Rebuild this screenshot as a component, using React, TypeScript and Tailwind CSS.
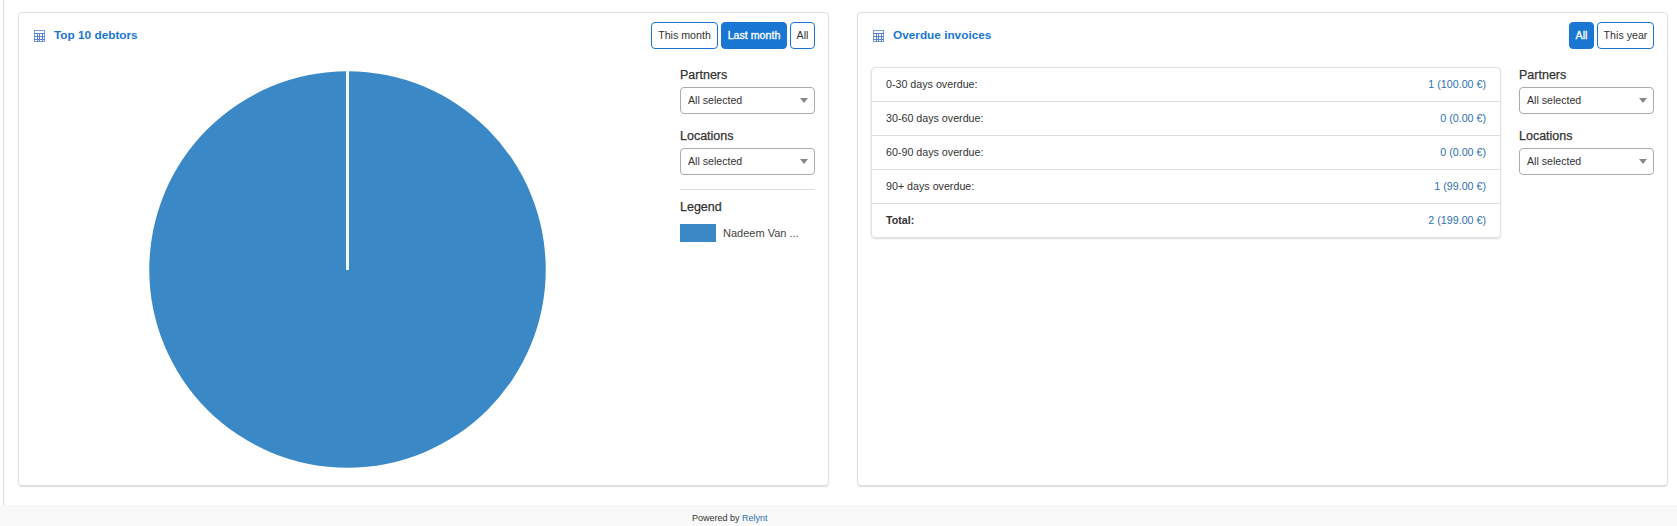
import React from 'react';

const CalendarIcon = () => (
  <svg width="11" height="12" viewBox="0 0 11 12" className="shrink-0" fill="none" stroke="#5b82d6" strokeWidth="1" shapeRendering="crispEdges">
    <rect x="0.5" y="0.5" width="10" height="11" stroke="#7d9be0" />
    <path d="M0 3.5H11M0 6.5H11M0 9H11M3.5 4V12M5.5 4V12M8 4V12" />
  </svg>
);

const RangeButton: React.FC<{ label: string; active?: boolean; className: string }> = ({ label, active, className }) => (
  <button
    className={`h-[27px] rounded-[4px] border border-[#1976d2] text-center text-[10.65px] ${className} ${
      active ? 'bg-[#1976d2] text-white [-webkit-text-stroke:0.3px_#fff]' : 'bg-white text-[#333]'
    }`}
  >
    {label}
  </button>
);

const FilterSelect: React.FC<{ label: string }> = ({ label }) => (
  <div>
    <div className="mb-[4px] h-[18px] text-[12.5px] leading-[20px] text-[#333] [-webkit-text-stroke:0.25px_#333]">{label}</div>
    <div className="flex h-[27px] items-center justify-between rounded-[4px] border border-[#aaa] bg-white pr-[6px] pl-[7px] text-[10.6px] text-[#333]">
      <span>All selected</span>
      <span className="h-0 w-0 border-x-[4px] border-t-[5px] border-x-transparent border-t-[#888]" />
    </div>
  </div>
);

const rows = [
  { name: '0-30 days overdue:', value: '1 (100.00 €)' },
  { name: '30-60 days overdue:', value: '0 (0.00 €)' },
  { name: '60-90 days overdue:', value: '0 (0.00 €)' },
  { name: '90+ days overdue:', value: '1 (99.00 €)' },
  { name: 'Total:', value: '2 (199.00 €)', bold: true },
];

export default function App() {
  return (
    <div className="flex h-[526px] flex-col bg-white font-['Liberation_Sans',Arial,sans-serif] text-[#333]">
      <div className="ml-[3px] flex h-[505px] gap-[28px] border-l border-[#ddd] pt-[12px] pr-[9px] pl-[14px]">
        <section className="h-[474px] w-[811px] rounded-[4px] border border-[#e0e0e0] pt-[9px] pr-[13px] pl-[13px] shadow-[0_1px_1px_#ddd]">
          <div className="flex items-start justify-between">
            <h2 className="flex h-[27px] items-center gap-[9px] pl-[2px] text-[11.8px] font-bold text-[#1976d2]">
              <CalendarIcon />
              Top 10 debtors
            </h2>
            <div className="flex gap-[3px]">
              <RangeButton label="This month" className="w-[67px]" />
              <RangeButton label="Last month" active className="w-[66px]" />
              <RangeButton label="All" className="w-[25px]" />
            </div>
          </div>
          <div className="flex justify-between">
            <svg width="397" height="397" viewBox="0 0 397 397" className="mt-[22px] ml-[117px]">
              <circle cx="198.5" cy="198.5" r="198.25" fill="#3b88c6" />
              <rect x="197" y="0" width="3" height="199" fill="#f2f7fb" />
            </svg>
            <aside className="mt-[16px] flex w-[135px] flex-col">
              <FilterSelect label="Partners" />
              <div className="mt-[12px]">
                <FilterSelect label="Locations" />
              </div>
              <hr className="mt-[14px] border-[#ddd]" />
              <div className="mt-[8px] h-[18px] text-[12.5px] leading-[18px] [-webkit-text-stroke:0.25px_#333]">Legend</div>
              <div className="mt-[8px] flex items-center gap-[7px]">
                <span className="h-[18px] w-[36px] bg-[#3b88c6]" />
                <span className="pt-[1px] text-[11px] text-[#444]">Nadeem Van ...</span>
              </div>
            </aside>
          </div>
        </section>

        <section className="h-[474px] w-[811px] rounded-[4px] border border-[#e0e0e0] pt-[9px] pr-[13px] pl-[13px] shadow-[0_1px_1px_#ddd]">
          <div className="flex items-start justify-between">
            <h2 className="flex h-[27px] items-center gap-[9px] pl-[2px] text-[11.8px] font-bold text-[#1976d2]">
              <CalendarIcon />
              Overdue invoices
            </h2>
            <div className="flex gap-[3px]">
              <RangeButton label="All" active className="w-[25px]" />
              <RangeButton label="This year" className="w-[57px]" />
            </div>
          </div>
          <div className="flex justify-between">
            <div className="mt-[18px] h-fit w-[630px] rounded-[4px] border border-[#e0e0e0] shadow-[0_1px_2px_#ddd]">
              {rows.map((r, i) => (
                <div
                  key={r.name}
                  className={`flex items-center justify-between px-[14px] text-[10.7px] ${i > 0 ? 'h-[34px] border-t border-[#ddd]' : 'h-[33px]'}`}
                >
                  <span className={r.bold ? 'font-bold' : ''}>{r.name}</span>
                  <span className="text-[#2f70b2]">{r.value}</span>
                </div>
              ))}
            </div>
            <aside className="mt-[16px] flex w-[135px] flex-col">
              <FilterSelect label="Partners" />
              <div className="mt-[12px]">
                <FilterSelect label="Locations" />
              </div>
            </aside>
          </div>
        </section>
      </div>
      <footer className="flex h-[21px] items-center bg-[#f9f9f9] pt-[6px] pl-[692px] text-[9px] text-[#333]">
        <span>
          Powered by <span className="text-[#2f70b2]">Relynt</span>
        </span>
      </footer>
    </div>
  );
}
